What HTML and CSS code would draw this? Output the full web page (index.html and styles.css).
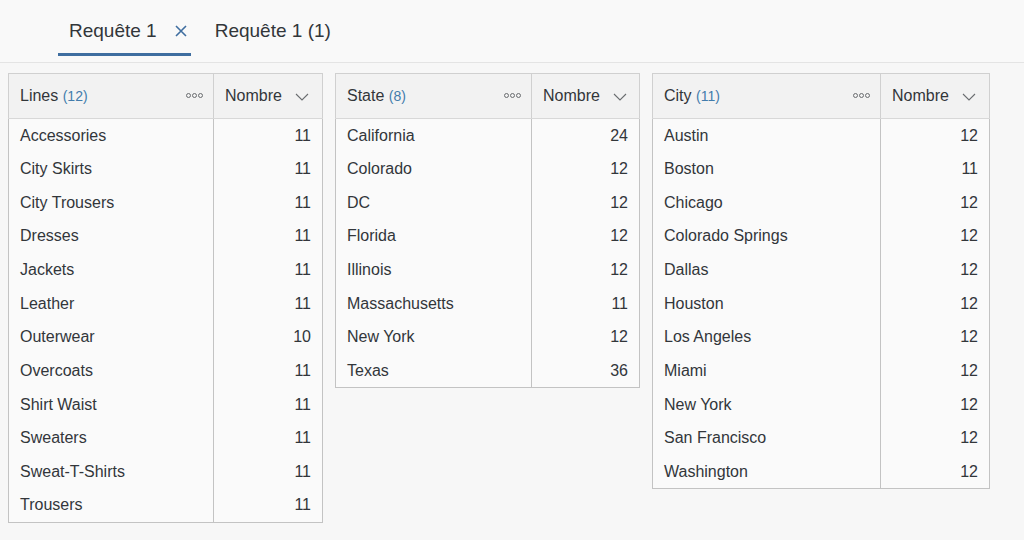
FILE: index.html
```html
<!DOCTYPE html>
<html lang="fr">
<head>
    <meta charset="UTF-8">
    <title>Requête 1</title>
    <link rel="stylesheet" href="styles.css">
</head>
<body>
    <div class="tabbar">
        <div class="tab active">
            <span>Requête 1</span>
            <svg class="close" width="12" height="12" viewBox="0 0 12 12"><path d="M1 1 L11 11 M11 1 L1 11" stroke="currentColor" stroke-width="1.6" fill="none"/></svg>
        </div>
        <div class="tab"><span>Requête 1 (1)</span></div>
    </div>
    <div class="tables">
        <table class="grid t-lines">
            <thead>
                <tr>
                    <th class="dim">Lines <span class="count">(12)</span><span class="more"><i></i><i></i><i></i></span></th>
                    <th class="measure">Nombre <svg class="chev" width="14" height="8" viewBox="0 0 14 8"><path d="M1 1 L7 7 L13 1" stroke="currentColor" stroke-width="1.1" fill="none"/></svg></th>
                </tr>
            </thead>
            <tbody>
                <tr><td>Accessories</td><td class="num">11</td></tr>
                <tr><td>City Skirts</td><td class="num">11</td></tr>
                <tr><td>City Trousers</td><td class="num">11</td></tr>
                <tr><td>Dresses</td><td class="num">11</td></tr>
                <tr><td>Jackets</td><td class="num">11</td></tr>
                <tr><td>Leather</td><td class="num">11</td></tr>
                <tr><td>Outerwear</td><td class="num">10</td></tr>
                <tr><td>Overcoats</td><td class="num">11</td></tr>
                <tr><td>Shirt Waist</td><td class="num">11</td></tr>
                <tr><td>Sweaters</td><td class="num">11</td></tr>
                <tr><td>Sweat-T-Shirts</td><td class="num">11</td></tr>
                <tr><td>Trousers</td><td class="num">11</td></tr>
            </tbody>
        </table>
        <table class="grid t-state">
            <thead>
                <tr>
                    <th class="dim">State <span class="count">(8)</span><span class="more"><i></i><i></i><i></i></span></th>
                    <th class="measure">Nombre <svg class="chev" width="14" height="8" viewBox="0 0 14 8"><path d="M1 1 L7 7 L13 1" stroke="currentColor" stroke-width="1.1" fill="none"/></svg></th>
                </tr>
            </thead>
            <tbody>
                <tr><td>California</td><td class="num">24</td></tr>
                <tr><td>Colorado</td><td class="num">12</td></tr>
                <tr><td>DC</td><td class="num">12</td></tr>
                <tr><td>Florida</td><td class="num">12</td></tr>
                <tr><td>Illinois</td><td class="num">12</td></tr>
                <tr><td>Massachusetts</td><td class="num">11</td></tr>
                <tr><td>New York</td><td class="num">12</td></tr>
                <tr><td>Texas</td><td class="num">36</td></tr>
            </tbody>
        </table>
        <table class="grid t-city">
            <thead>
                <tr>
                    <th class="dim">City <span class="count">(11)</span><span class="more"><i></i><i></i><i></i></span></th>
                    <th class="measure">Nombre <svg class="chev" width="14" height="8" viewBox="0 0 14 8"><path d="M1 1 L7 7 L13 1" stroke="currentColor" stroke-width="1.1" fill="none"/></svg></th>
                </tr>
            </thead>
            <tbody>
                <tr><td>Austin</td><td class="num">12</td></tr>
                <tr><td>Boston</td><td class="num">11</td></tr>
                <tr><td>Chicago</td><td class="num">12</td></tr>
                <tr><td>Colorado Springs</td><td class="num">12</td></tr>
                <tr><td>Dallas</td><td class="num">12</td></tr>
                <tr><td>Houston</td><td class="num">12</td></tr>
                <tr><td>Los Angeles</td><td class="num">12</td></tr>
                <tr><td>Miami</td><td class="num">12</td></tr>
                <tr><td>New York</td><td class="num">12</td></tr>
                <tr><td>San Francisco</td><td class="num">12</td></tr>
                <tr><td>Washington</td><td class="num">12</td></tr>
            </tbody>
        </table>
    </div>
</body>
</html>
```

FILE: styles.css
```css
body {
    margin: 0;
    background-color: #f7f7f7;
    color: #32363a;
    font-family: "Liberation Sans", Arial, sans-serif;
    font-size: 16px;
}

/* barre d'onglets */
.tabbar {
    display: flex;
    align-items: stretch;
    height: 63px;
    padding-left: 58px;
    padding-bottom: 6px;
    border-bottom: 1px solid #e4e4e4;
    background-color: #f9f9f9;
    box-sizing: border-box;
}
.tab {
    display: flex;
    align-items: center;
    gap: 18px;
    padding: 8px 11px 0;
    margin-right: 13px;
    font-size: 19px;
    color: #32363a;
    box-sizing: border-box;
    border-bottom: 3px solid transparent;
}
.tab.active {
    padding-right: 4px;
    margin-right: 13px;
    border-bottom-color: #3f6ea0;
}
.tab .close {
    color: #3f6ea0;
}

/* tableaux */
.tables {
    display: flex;
    align-items: flex-start;
    gap: 12px;
    padding: 10px 8px;
}
.grid {
    border-collapse: collapse;
    border: 1px solid #c3c3c3;
    table-layout: fixed;
    background-color: #fafafa;
}
.grid th {
    height: 45px;
    background-color: #f2f2f2;
    border: 1px solid #d0d0d0;
    border-bottom: 1px solid #d8d8d8;
    font-weight: normal;
    text-align: left;
    padding: 0 11px;
    white-space: nowrap;
    box-sizing: border-box;
}
.grid td {
    height: 33.67px;
    padding: 0 11px;
    border-left: 1px solid #c3c3c3;
    white-space: nowrap;
    box-sizing: border-box;
}
.grid td.num {
    text-align: right;
}
.count {
    color: #427cac;
    font-size: 14px;
}
.dim {
    position: relative;
}
.more {
    position: absolute;
    right: 10px;
    top: 50%;
    margin-top: -3px;
    display: flex;
    gap: 1px;
}
.more i {
    display: block;
    width: 3px;
    height: 3px;
    border: 1px solid #6a6d70;
    border-radius: 50%;
}
.measure .chev {
    color: #6a6d70;
    margin-left: 9px;
    vertical-align: middle;
}

.t-lines { width: 315px; }
.t-lines .dim { width: 205px; }
.t-state { width: 305px; }
.t-state .dim { width: 196px; }
.t-city { width: 338px; }
.t-city .dim { width: 228px; }
```
